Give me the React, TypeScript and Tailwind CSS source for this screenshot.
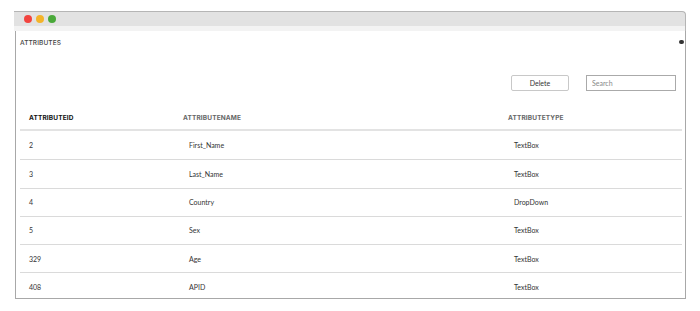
import React from "react";

const rows = [
  { id: "2", name: "First_Name", type: "TextBox" },
  { id: "3", name: "Last_Name", type: "TextBox" },
  { id: "4", name: "Country", type: "DropDown" },
  { id: "5", name: "Sex", type: "TextBox" },
  { id: "329", name: "Age", type: "TextBox" },
  { id: "408", name: "APID", type: "TextBox" },
];

const App = () => {
  return (
    <div className="h-[311px] w-[700px] bg-white pl-[14px] pt-[11px] font-['Lato',sans-serif]">
      <div className="w-[672px]">
        {/* Title bar */}
        <div className="flex h-[15px] items-center gap-[4px] rounded-tr-[4px] border-r border-t border-[#b5b5b5] bg-[#e2e2e2] pl-[10px]">
          <span className="h-[8px] w-[8px] rounded-full bg-[#f2443f]" />
          <span className="h-[8px] w-[8px] rounded-full bg-[#f4b42a]" />
          <span className="h-[8px] w-[8px] rounded-full bg-[#4aa93a]" />
        </div>
        <div className="h-[5px] border-r border-[#b5b5b5] bg-[#f3f3f3]" />

        {/* Content */}
        <div className="ml-[1px] h-[268px] border-b border-l border-r border-[#a8a8a8]">
          <div className="flex h-[24px] items-start justify-between pl-[4px] pr-[1px] pt-[8px]">
            <span className="font-['Inter',sans-serif] text-[6.5px] font-medium tracking-[0.1px] text-[#444]">
              ATTRIBUTES
            </span>
            <span className="mt-[1px] h-[4px] w-[5px] rounded-full bg-[#333]" />
          </div>

          {/* Toolbar */}
          <div className="mt-[20px] flex justify-end gap-[17px] pr-[9px]">
            <button className="h-[16px] w-[58px] rounded-[2px] border border-[#c8c8c8] bg-white text-[7px] text-[#333]">
              Delete
            </button>
            <input
              placeholder="Search"
              className="h-[16px] w-[90px] border border-[#aaa] px-[5px] text-[7px] text-[#333] outline-none placeholder:text-[#888]"
            />
          </div>

          {/* Table */}
          <div className="ml-[4px] mr-[3px] mt-[17px]">
            <div className="grid h-[23px] grid-cols-[154px_325px_1fr] items-center border-b-2 border-[#e3e3e3] font-['Inter',sans-serif] text-[6.5px] font-bold tracking-[0.15px]">
              <span className="pl-[9px] text-[#111]">ATTRIBUTEID</span>
              <span className="pl-[9px] text-[#666]">ATTRIBUTENAME</span>
              <span className="pl-[9px] text-[#666]">ATTRIBUTETYPE</span>
            </div>
            {rows.map((row, idx) => (
              <div
                key={row.id}
                className={
                  "grid h-[28.3px] grid-cols-[154px_325px_1fr] items-center text-[7px] text-[#333] " +
                  (idx > 0 ? "border-t border-[#dadada]" : "")
                }
              >
                <span className="pl-[9px]">{row.id}</span>
                <span className="pl-[15px]">{row.name}</span>
                <span className="pl-[15px]">{row.type}</span>
              </div>
            ))}
          </div>
        </div>
      </div>
    </div>
  );
};

export default App;
